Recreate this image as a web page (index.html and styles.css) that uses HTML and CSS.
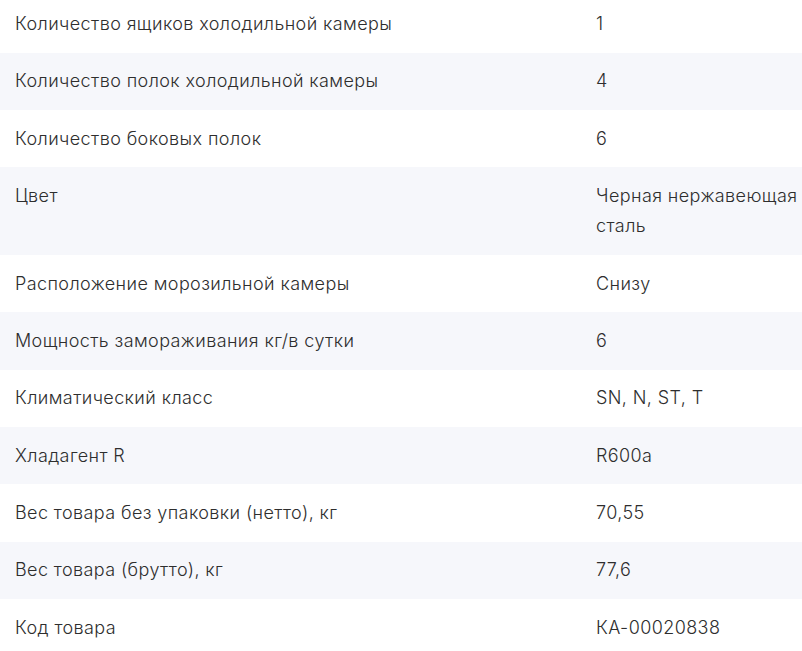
FILE: index.html
```html
<!DOCTYPE html>
<html lang="ru">
<head>
<meta charset="utf-8">
<link rel="stylesheet" href="styles.css">
</head>
<body>
<div class="specs">
  <div class="row"><div class="label">Количество ящиков холодильной камеры</div><div class="value">1</div></div>
  <div class="row"><div class="label">Количество полок холодильной камеры</div><div class="value">4</div></div>
  <div class="row"><div class="label">Количество боковых полок</div><div class="value">6</div></div>
  <div class="row"><div class="label">Цвет</div><div class="value">Черная нержавеющая сталь</div></div>
  <div class="row"><div class="label">Расположение морозильной камеры</div><div class="value">Снизу</div></div>
  <div class="row"><div class="label">Мощность замораживания кг/в сутки</div><div class="value">6</div></div>
  <div class="row"><div class="label">Климатический класс</div><div class="value">SN, N, ST, T</div></div>
  <div class="row"><div class="label">Хладагент R</div><div class="value">R600a</div></div>
  <div class="row"><div class="label">Вес товара без упаковки (нетто), кг</div><div class="value">70,55</div></div>
  <div class="row"><div class="label">Вес товара (брутто), кг</div><div class="value">77,6</div></div>
  <div class="row"><div class="label">Код товара</div><div class="value">КА-00020838</div></div>
</div>
</body>
</html>
```
FILE: styles.css
```css
html, body {
  margin: 0;
  padding: 0;
  background: #ffffff;
  overflow: hidden;
}
.specs {
  margin-top: -4.7px;
  font-family: Inter, "Noto Sans", sans-serif;
  font-size: 18px;
  font-weight: 350;
  letter-spacing: 0.4px;
  line-height: 30px;
  color: #2e2e2e;
}
.row {
  display: grid;
  grid-template-columns: 596px 1fr;
  padding: 13.7px 0;
}
.row:nth-child(even) {
  background: #f6f7fb;
}
.label {
  padding-left: 15px;
}
.value {
  padding-right: 2px;
}
```
